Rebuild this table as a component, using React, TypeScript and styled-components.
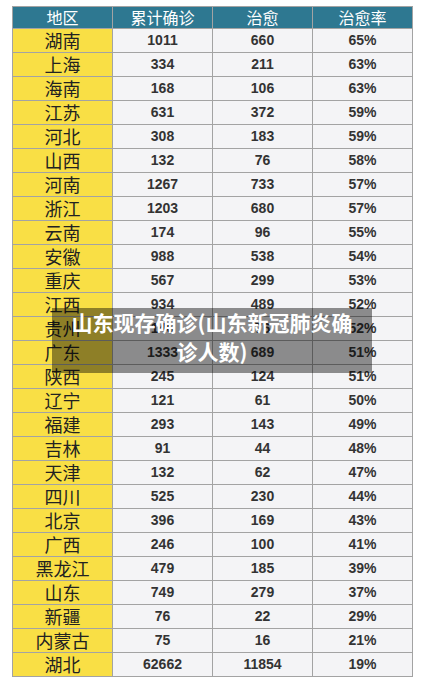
import React from 'react';
import styled, { createGlobalStyle } from 'styled-components';

const GlobalStyle = createGlobalStyle`
  html, body {
    margin: 0;
    padding: 0;
    background: #fff;
  }
`;

const Page = styled.div`
  position: relative;
  width: 424px;
  height: 682px;
  padding: 6px 0 0 12px;
  box-sizing: border-box;
  font-family: 'Noto Sans CJK SC', 'Liberation Sans', sans-serif;
`;

const Table = styled.table`
  border-collapse: collapse;
  table-layout: fixed;
  width: 401px;
  border: 1.5px solid #a3a3a3;
`;

const HeadCell = styled.th`
  height: 21px;
  padding: 0;
  background: #2e7891;
  color: #fff;
  font-weight: 400;
  font-size: 16px;
  line-height: 21px;
  text-align: center;
  border: 1.5px solid #a3a3a3;
`;

const Cell = styled.td<{ $region?: boolean }>`
  height: 23px;
  padding: 0;
  text-align: center;
  border: 1.5px solid #a3a3a3;
  background: ${(p) => (p.$region ? '#f9df45' : '#f4f4f6')};
  color: ${(p) => (p.$region ? '#222' : '#333')};
  font-family: ${(p) =>
    p.$region ? "'Noto Sans CJK SC', sans-serif" : "'Liberation Sans', Arial, sans-serif"};
  font-weight: ${(p) => (p.$region ? 400 : 700)};
  font-size: ${(p) => (p.$region ? '18px' : '14px')};
  line-height: 23px;
`;

const Caption = styled.div`
  position: absolute;
  left: 52px;
  top: 308px;
  width: 320px;
  height: 65px;
  box-sizing: border-box;
  padding: 0 18px;
  background: rgba(0, 0, 0, 0.43);
  color: #fff;
  font-family: 'Noto Sans CJK SC', sans-serif;
  font-weight: 700;
  font-size: 21px;
  line-height: 29px;
  text-align: center;
`;

const rows: [string, string, string, string][] = [
  ['湖南', '1011', '660', '65%'],
  ['上海', '334', '211', '63%'],
  ['海南', '168', '106', '63%'],
  ['江苏', '631', '372', '59%'],
  ['河北', '308', '183', '59%'],
  ['山西', '132', '76', '58%'],
  ['河南', '1267', '733', '57%'],
  ['浙江', '1203', '680', '57%'],
  ['云南', '174', '96', '55%'],
  ['安徽', '988', '538', '54%'],
  ['重庆', '567', '299', '53%'],
  ['江西', '934', '489', '52%'],
  ['贵州', '146', '76', '52%'],
  ['广东', '1333', '689', '51%'],
  ['陕西', '245', '124', '51%'],
  ['辽宁', '121', '61', '50%'],
  ['福建', '293', '143', '49%'],
  ['吉林', '91', '44', '48%'],
  ['天津', '132', '62', '47%'],
  ['四川', '525', '230', '44%'],
  ['北京', '396', '169', '43%'],
  ['广西', '246', '100', '41%'],
  ['黑龙江', '479', '185', '39%'],
  ['山东', '749', '279', '37%'],
  ['新疆', '76', '22', '29%'],
  ['内蒙古', '75', '16', '21%'],
  ['湖北', '62662', '11854', '19%'],
];

export default function App() {
  return (
    <>
      <GlobalStyle />
      <Page>
        <Table>
          <thead>
            <tr>
              <HeadCell>地区</HeadCell>
              <HeadCell>累计确诊</HeadCell>
              <HeadCell>治愈</HeadCell>
              <HeadCell>治愈率</HeadCell>
            </tr>
          </thead>
          <tbody>
            {rows.map((r) => (
              <tr key={r[0]}>
                <Cell $region>{r[0]}</Cell>
                <Cell>{r[1]}</Cell>
                <Cell>{r[2]}</Cell>
                <Cell>{r[3]}</Cell>
              </tr>
            ))}
          </tbody>
        </Table>
        <Caption>山东现存确诊(山东新冠肺炎确诊人数)</Caption>
      </Page>
    </>
  );
}
